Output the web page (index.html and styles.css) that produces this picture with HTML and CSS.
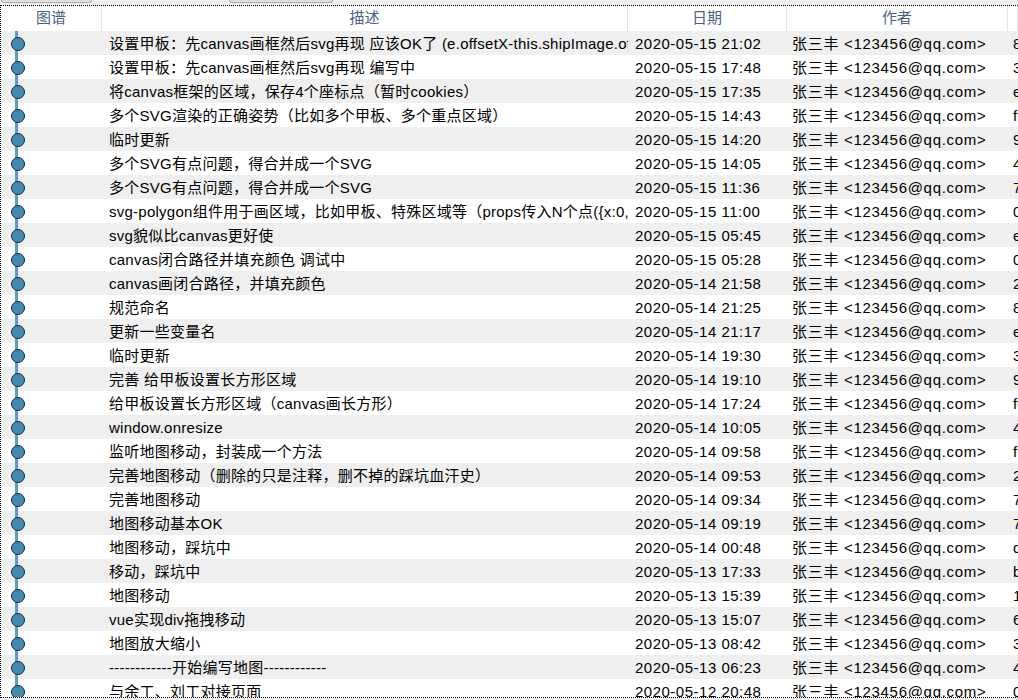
FILE: index.html
```html
<!DOCTYPE html>
<html>
<head>
    <meta charset="utf-8" />
    <link rel="stylesheet" href="styles.css">
</head>
<body>
    <section class="toolbar">
        <div class="btn btn-a"></div>
        <div class="btn btn-b"></div>
    </section>

    <section class="log">
        <div class="row head">
            <div class="cell">图谱</div>
            <div class="cell">描述</div>
            <div class="cell">日期</div>
            <div class="cell">作者</div>
            <div class="cell"></div>
        </div>
        <div class="rows"></div>
    </section>

    <script>
        const commits = [
            ["设置甲板：先canvas画框然后svg再现 应该OK了 (e.offsetX-this.shipImage.offsetLeft)", "2020-05-15 21:02", "8a3c1e7"],
            ["设置甲板：先canvas画框然后svg再现 编写中", "2020-05-15 17:48", "3f0b9d2"],
            ["将canvas框架的区域，保存4个座标点（暂时cookies）", "2020-05-15 17:35", "e71c0a4"],
            ["多个SVG渲染的正确姿势（比如多个甲板、多个重点区域）", "2020-05-15 14:43", "f29e3b1"],
            ["临时更新", "2020-05-15 14:20", "9d04c6a"],
            ["多个SVG有点问题，得合并成一个SVG", "2020-05-15 14:05", "4b7e21f"],
            ["多个SVG有点问题，得合并成一个SVG", "2020-05-15 11:36", "7c1a8d0"],
            ["svg-polygon组件用于画区域，比如甲板、特殊区域等（props传入N个点({x:0,y:0})）", "2020-05-15 11:00", "0e5f3b9"],
            ["svg貌似比canvas更好使", "2020-05-15 05:45", "e3d90a2"],
            ["canvas闭合路径并填充颜色 调试中", "2020-05-15 05:28", "0a6b4c1"],
            ["canvas画闭合路径，并填充颜色", "2020-05-14 21:58", "2f8e7d3"],
            ["规范命名", "2020-05-14 21:25", "8c2a1f6"],
            ["更新一些变量名", "2020-05-14 21:17", "e94b0d5"],
            ["临时更新", "2020-05-14 19:30", "3a1d7c8"],
            ["完善 给甲板设置长方形区域", "2020-05-14 19:10", "9b6f2e0"],
            ["给甲板设置长方形区域（canvas画长方形）", "2020-05-14 17:24", "f0c3a91"],
            ["window.onresize", "2020-05-14 10:05", "4e8b2d7"],
            ["监听地图移动，封装成一个方法", "2020-05-14 09:58", "f7a1c03"],
            ["完善地图移动（删除的只是注释，删不掉的踩坑血汗史）", "2020-05-14 09:53", "2d9e6b4"],
            ["完善地图移动", "2020-05-14 09:34", "7b3f0a8"],
            ["地图移动基本OK", "2020-05-14 09:19", "7e2c9d1"],
            ["地图移动，踩坑中", "2020-05-14 00:48", "d41a8f6"],
            ["移动，踩坑中", "2020-05-13 17:33", "b0e7c32"],
            ["地图移动", "2020-05-13 15:39", "1c5d9a7"],
            ["vue实现div拖拽移动", "2020-05-13 15:07", "6f2b8e0"],
            ["地图放大缩小", "2020-05-13 08:42", "3e9a4c1"],
            ["------------开始编写地图------------", "2020-05-13 06:23", "4a0d7f5"],
            ["与余工、刘工对接页面", "2020-05-12 20:48", "0b6c3e9"]
        ];

        const rows = document.querySelector(".rows");
        for (const [msg, date, hash] of commits) {
            const row = document.createElement("div");
            row.className = "row";
            row.innerHTML =
                '<div class="cell graph"></div>' +
                '<div class="cell msg"></div>' +
                '<div class="cell date"></div>' +
                '<div class="cell author">张三丰 &lt;123456@qq.com&gt;</div>' +
                '<div class="cell hash"></div>';
            row.querySelector(".msg").textContent = msg;
            row.querySelector(".date").textContent = date;
            row.querySelector(".hash").textContent = hash;
            rows.appendChild(row);
        }
    </script>
</body>
</html>
```

FILE: styles.css
```css
* {
    padding: 0;
    margin: 0;
    box-sizing: border-box;
}

body {
    width: 1018px;
    height: 700px;
    background-color: #f0f0f0;
    font-family: "Liberation Sans", "Noto Sans CJK SC", sans-serif;
    font-size: 15px;
    color: #000;
    overflow: hidden;
}

.toolbar {
    display: flex;
    height: 5px;
}

.btn {
    height: 3px;
    background-color: #e1e1e1;
    border: 1px solid #adadad;
    border-top: none;
    border-radius: 0 0 3px 3px;
}

.btn-a {
    width: 91px;
    margin-left: 1px;
}

.btn-b {
    width: 104px;
    margin-left: 137px;
}

.log {
    height: 693px;
    background-color: #fff;
    border: 1px dotted #000;
    border-right: none;
    overflow: hidden;
}

.row {
    display: grid;
    grid-template-columns: 101px 526px 159px 221px 1fr;
    height: 24px;
    line-height: 24px;
    white-space: nowrap;
}

.rows .row:nth-child(odd) {
    background-color: #efefef;
}

.rows .cell {
    padding-top: 1px;
}

.head {
    height: 25px;
    line-height: 23px;
    color: #4d6184;
    text-align: center;
}

.head .cell {
    border-right: 1px solid #e5e5e5;
}

.cell {
    overflow: hidden;
}

.msg {
    padding-left: 7px;
    letter-spacing: 0.25px;
}

.date {
    padding-left: 7px;
    letter-spacing: 0.5px;
}

.author {
    padding-left: 5px;
    letter-spacing: 0.7px;
}

.hash {
    padding-left: 5px;
}

.graph {
    position: relative;
}

.graph::before {
    content: "";
    position: absolute;
    left: 14px;
    top: 0;
    bottom: 0;
    width: 3px;
    background-color: #5b9cc3;
}

.graph::after {
    content: "";
    position: absolute;
    left: 10px;
    top: 6px;
    width: 12px;
    height: 12px;
    border-radius: 50%;
    background-color: #428ab4;
    border: 1.5px solid #1b2b38;
}
```
